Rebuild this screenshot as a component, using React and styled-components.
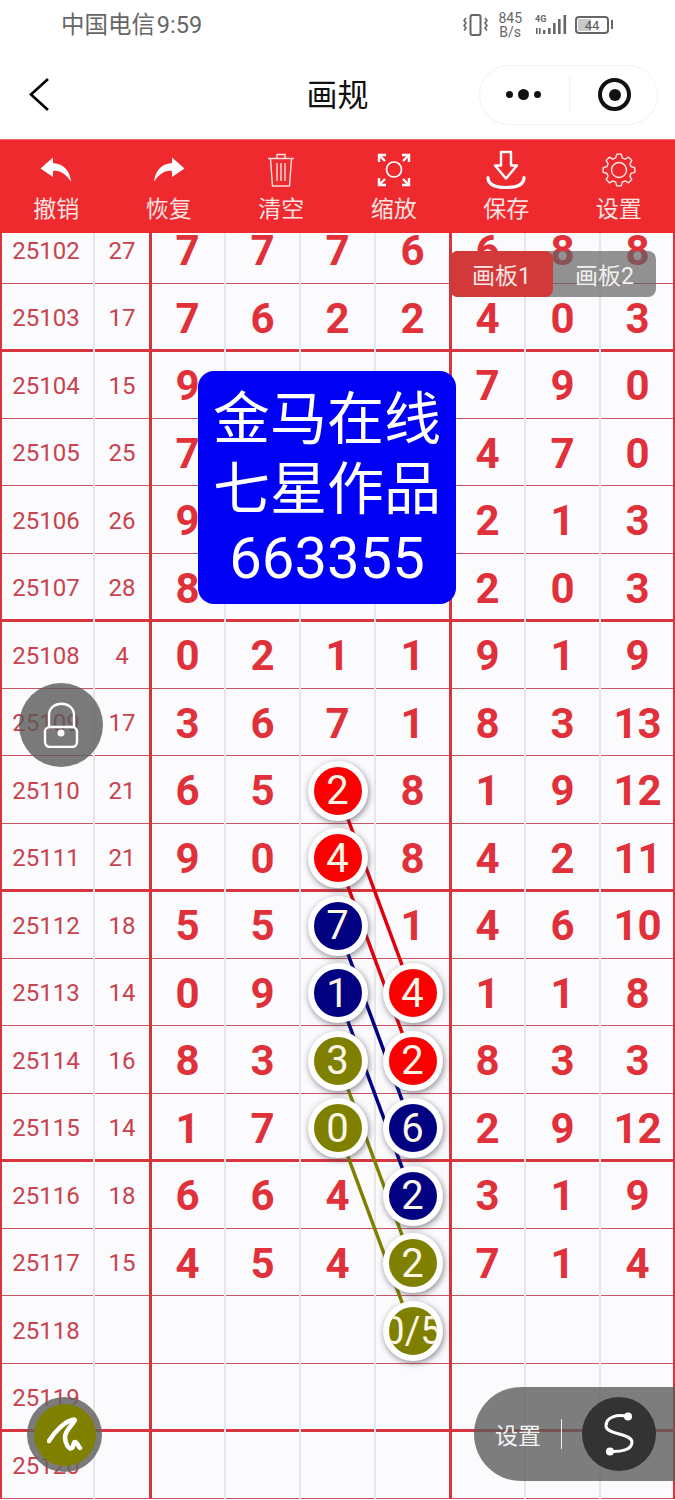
import React from 'react'
import styled, { createGlobalStyle } from 'styled-components'

const ROW_H = 67.5
const CELL_W = 75
const LEFT_W = 150

const sheet = [
  { id: 25102, sum: 27, nums: [7, 7, 7, 6, 6, 8, 8] },
  { id: 25103, sum: 17, nums: [7, 6, 2, 2, 4, 0, 3] },
  { id: 25104, sum: 15, nums: [9, '', '', '', 7, 9, 0] },
  { id: 25105, sum: 25, nums: [7, '', '', '', 4, 7, 0] },
  { id: 25106, sum: 26, nums: [9, '', '', '', 2, 1, 3] },
  { id: 25107, sum: 28, nums: [8, '', '', '', 2, 0, 3] },
  { id: 25108, sum: 4, nums: [0, 2, 1, 1, 9, 1, 9] },
  { id: 25109, sum: 17, nums: [3, 6, 7, 1, 8, 3, 13] },
  { id: 25110, sum: 21, nums: [6, 5, 2, 8, 1, 9, 12] },
  { id: 25111, sum: 21, nums: [9, 0, 4, 8, 4, 2, 11] },
  { id: 25112, sum: 18, nums: [5, 5, 7, 1, 4, 6, 10] },
  { id: 25113, sum: 14, nums: [0, 9, 1, 4, 1, 1, 8] },
  { id: 25114, sum: 16, nums: [8, 3, 3, 2, 8, 3, 3] },
  { id: 25115, sum: 14, nums: [1, 7, 0, 6, 2, 9, 12] },
  { id: 25116, sum: 18, nums: [6, 6, 4, 2, 3, 1, 9] },
  { id: 25117, sum: 15, nums: [4, 5, 4, 2, 7, 1, 4] },
  { id: 25118, sum: '', nums: ['', '', '', '0/5', '', '', ''] },
  { id: 25119, sum: '', nums: ['', '', '', '', '', '', ''] },
  { id: 25120, sum: '', nums: ['', '', '', '', '', '', ''] },
]

// row index + column index of every circled number, with its colour
const balls = {
  '8-2': '#fa0000', '9-2': '#fa0000',
  '10-2': '#000080', '11-2': '#000080',
  '12-2': '#808000', '13-2': '#808000',
  '11-3': '#fa0000', '12-3': '#fa0000',
  '13-3': '#000080', '14-3': '#000080',
  '15-3': '#808000', '16-3': '#808000',
}

const links = [
  { from: 8, to: 11, color: '#e0000a' },
  { from: 9, to: 12, color: '#e0000a' },
  { from: 10, to: 13, color: '#000080' },
  { from: 11, to: 14, color: '#000080' },
  { from: 12, to: 15, color: '#808000' },
  { from: 13, to: 16, color: '#808000' },
]

function UndoIcon({ flip }) {
  return (
    <svg width="32" height="26" viewBox="0 0 32 26" style={flip ? { transform: 'scaleX(-1)' } : undefined}>
      <path d="M13 0.5 L0.5 11.5 L13 20 L13 14 C20 13 26 17 31 25 C30 14 24 7 13 6 Z" fill="#fff" />
    </svg>
  )
}

function TrashIcon() {
  return (
    <svg width="28" height="34" viewBox="0 0 28 34" fill="none" stroke="#fff" strokeWidth="1.4" opacity="0.85">
      <path d="M1 5.5 H27 M10 5 V1.5 H18 V5" />
      <path d="M3.5 6 L5.5 33 H22.5 L24.5 6" />
      <path d="M10 10 V28 M14 10 V28 M18 10 V28" />
    </svg>
  )
}

function ZoomIcon() {
  return (
    <svg width="34" height="34" viewBox="0 0 34 34" fill="none" stroke="#fff" strokeWidth="2.4">
      <circle cx="17" cy="16.5" r="7.5" strokeWidth="1.7" />
      <path d="M2 9 V2 H9 M2 2 L8 8" />
      <path d="M32 9 V2 H25 M32 2 L26 8" />
      <path d="M2 25 V32 H9 M2 32 L8 26" />
      <path d="M32 25 V32 H25 M32 32 L26 26" />
    </svg>
  )
}

function SaveIcon() {
  return (
    <svg width="42" height="40" viewBox="0 0 42 40" fill="none" stroke="#fff" strokeLinejoin="round" strokeLinecap="round">
      <path d="M16 2 H26 V15.5 H32 L21 28.5 L10 15.5 H16 Z" strokeWidth="2.4" />
      <path d="M3 27.5 C3 34 9 37.5 21 37.5 C33 37.5 39 34 39 27.5" strokeWidth="3.2" />
    </svg>
  )
}

// outline gear with 8 teeth, the points are worked out around the centre
function gearPath() {
  const pts = []
  for (let i = 0; i < 8; i++) {
    const a = (i * Math.PI) / 4
    const steps = [[-0.27, 12.5], [-0.14, 16], [0.14, 16], [0.27, 12.5]]
    steps.forEach(([da, r]) => {
      pts.push(`${(17 + r * Math.cos(a + da)).toFixed(2)} ${(17 + r * Math.sin(a + da)).toFixed(2)}`)
    })
  }
  return `M${pts.join(' L')} Z`
}

function GearIcon() {
  return (
    <svg width="34" height="34" viewBox="0 0 34 34" fill="none" stroke="#fff" strokeWidth="1.4" strokeLinejoin="round" opacity="0.9">
      <path d={gearPath()} />
      <circle cx="17" cy="17" r="7.5" />
    </svg>
  )
}

function SignalIcon() {
  return (
    <svg width="36" height="24" viewBox="0 0 36 24" fill="#666">
      <text x="1" y="9" fontSize="9" fontWeight="700" fontFamily="Roboto, sans-serif">4G</text>
      <path d="M2 15 h1.6 v6 h-1.6 z M5 15 h1.6 v6 h-1.6 z" />
      <rect x="9" y="17" width="2.4" height="4" />
      <rect x="14" y="15" width="2.6" height="6" />
      <rect x="19" y="10" width="2.6" height="11" />
      <rect x="24" y="6" width="2.6" height="15" />
      <rect x="29.5" y="2" width="2.6" height="19" />
    </svg>
  )
}

function VibrateIcon() {
  return (
    <svg width="25" height="24" viewBox="0 0 25 24" fill="none" stroke="#666" strokeWidth="1.6">
      <rect x="7.5" y="2" width="10" height="20" rx="2" strokeWidth="2" />
      <path d="M3 5 l-2 2.5 l2 2.5 l-2 2.5 l2 2.5 l-2 2.5" />
      <path d="M22 5 l2 2.5 l-2 2.5 l2 2.5 l-2 2.5 l2 2.5" />
    </svg>
  )
}

function PenIcon() {
  return (
    <svg width="36" height="36" viewBox="0 0 36 36" fill="none" stroke="#fff" strokeWidth="4.5" strokeLinecap="round" strokeLinejoin="round">
      <path d="M2 24 C8 14 18 4 27 2.5 C31 3 18 12 18 20 C18 27 22 33 25 31 C27 29 26 25 28 25 C30 25 31 29 33 31" />
    </svg>
  )
}

function CurveIcon() {
  return (
    <svg width="44" height="50" viewBox="0 0 44 50" fill="none" stroke="#fff" strokeWidth="3">
      <path d="M31 7.5 C20 5 9 8 9 17 C9 26 35 24 35 33 C35 41 24 43 13 42.5" />
      <circle cx="31" cy="7.5" r="4" fill="#fff" stroke="none" />
      <circle cx="13" cy="42.5" r="4" fill="#fff" stroke="none" />
    </svg>
  )
}

const tools = [
  { label: '撤销', icon: <UndoIcon /> },
  { label: '恢复', icon: <UndoIcon flip /> },
  { label: '清空', icon: <TrashIcon /> },
  { label: '缩放', icon: <ZoomIcon /> },
  { label: '保存', icon: <SaveIcon /> },
  { label: '设置', icon: <GearIcon /> },
]

const cellX = col => LEFT_W + CELL_W * col + CELL_W / 2
const rowY = row => (row + 0.5) * ROW_H + 1

export default function App() {
  return (
    <>
      <GlobalStyle />
      <Page>
        <StatusBar>
          <Carrier>中国电信 9:59</Carrier>
          <StatusIcons>
            <VibrateIcon />
            <NetSpeed>845<br />B/s</NetSpeed>
            <SignalSlot><SignalIcon /></SignalSlot>
            <Battery><BatteryFill /><BatteryText>44</BatteryText></Battery>
          </StatusIcons>
        </StatusBar>

        <NavBar>
          <BackIcon width="24" height="36" viewBox="0 0 24 36" fill="none" stroke="#000" strokeWidth="2.6">
            <path d="M20 2 L3 17.5 L20 33" />
          </BackIcon>
          <NavTitle>画规</NavTitle>
          <Capsule>
            <Dots><Dot /><Dot $big /><Dot /></Dots>
            <CapsuleSep />
            <TargetIcon />
          </Capsule>
        </NavBar>

        <Toolbar>
          {tools.map(tool => (
            <Tool key={tool.label}>
              <ToolIcon>{tool.icon}</ToolIcon>
              <ToolLabel>{tool.label}</ToolLabel>
            </Tool>
          ))}
        </Toolbar>

        <Viewport>
          <Sheet>
            <Links width="675" height={sheet.length * ROW_H}>
              {links.map(link => (
                <line
                  key={link.from}
                  x1={cellX(2)}
                  y1={rowY(link.from)}
                  x2={cellX(3)}
                  y2={rowY(link.to)}
                  stroke={link.color}
                  strokeWidth="3.5"
                />
              ))}
            </Links>
            {sheet.map((row, r) => (
              <Row key={row.id} $thick={r % 4 === 1}>
                <IdCell>{row.id}</IdCell>
                <SumCell>{row.sum}</SumCell>
                {row.nums.map((n, c) => (
                  <NumCell key={c} $heavy={c === 3}>
                    {balls[`${r}-${c}`] || n === '0/5'
                      ? <Ball $color={balls[`${r}-${c}`] || '#808000'} $wide={n === '0/5'}>{n}</Ball>
                      : n}
                  </NumCell>
                ))}
              </Row>
            ))}
          </Sheet>
        </Viewport>

        <Tabs>
          <Tab $active>画板1</Tab>
          <Tab>画板2</Tab>
        </Tabs>

        <Banner>金马在线<br />七星作品<br /><BannerNum>663355</BannerNum></Banner>

        <LockButton>
          <svg width="40" height="46" viewBox="0 0 40 46" fill="none" stroke="#fff" strokeWidth="2.4">
            <path d="M8 25 V13 C8 -2 33 -2 33 13 V25" />
            <rect x="4" y="25" width="32" height="20" rx="5" />
            <circle cx="20" cy="31" r="3.5" fill="#fff" stroke="none" />
          </svg>
        </LockButton>

        <PenButton><PenDisc><PenIcon /></PenDisc></PenButton>

        <SettingsPill>
          <PillLabel>设置</PillLabel>
          <PillSep />
          <PillDisc><CurveIcon /></PillDisc>
        </SettingsPill>
      </Page>
    </>
  )
}

const GlobalStyle = createGlobalStyle`
  html, body {
    margin: 0;
    padding: 0;
    background: #fff;
  }
  * {
    box-sizing: border-box;
  }
`

const Page = styled.div`
  position: relative;
  width: 675px;
  height: 1500px;
  overflow: hidden;
  display: flex;
  flex-direction: column;
  font-family: Roboto, "Noto Sans CJK SC", sans-serif;
`

const StatusBar = styled.div`
  height: 50px;
  flex: none;
  display: flex;
  align-items: center;
  justify-content: space-between;
  padding: 0 66px 0 61px;
  color: #666;
`

const Carrier = styled.div`
  font-size: 23.5px;
  word-spacing: -4px;
  padding-bottom: 4px;
`

const StatusIcons = styled.div`
  display: flex;
  align-items: center;
  gap: 10px;
`

const NetSpeed = styled.div`
  font-size: 14px;
  line-height: 14px;
  text-align: center;
`

const SignalSlot = styled.div`
  display: flex;
  margin: 0 -5px 0 2px;
`

const Battery = styled.div`
  position: relative;
  width: 34px;
  height: 18px;
  border: 2px solid #666;
  border-radius: 4px;
  display: flex;
  align-items: center;
  justify-content: center;
  &::after {
    content: '';
    position: absolute;
    right: -6px;
    top: 2px;
    width: 2px;
    height: 9px;
    background: #666;
  }
`

const BatteryFill = styled.div`
  position: absolute;
  left: 1px;
  top: 1px;
  bottom: 1px;
  width: 44%;
  background: #c8c8c8;
`

const BatteryText = styled.span`
  position: relative;
  font-size: 13px;
  color: #555;
`

const NavBar = styled.div`
  height: 89px;
  flex: none;
  display: grid;
  grid-template-columns: 1fr auto 1fr;
  align-items: center;
  padding: 0 17px;
`

const BackIcon = styled.svg`
  margin-left: 11px;
`

const NavTitle = styled.div`
  font-size: 31px;
  color: #111;
  margin-top: -4px;
`

const Capsule = styled.div`
  justify-self: end;
  width: 179px;
  height: 60px;
  border: 1px solid #f2f2f2;
  border-radius: 30px;
  display: flex;
  align-items: center;
  justify-content: space-between;
  padding: 0 26px;
`

const Dots = styled.div`
  display: flex;
  align-items: center;
  gap: 5px;
`

const Dot = styled.div`
  width: ${p => (p.$big ? 11 : 7)}px;
  height: ${p => (p.$big ? 11 : 7)}px;
  border-radius: 50%;
  background: #111;
`

const CapsuleSep = styled.div`
  width: 1px;
  height: 38px;
  background: #f2f2f2;
`

const TargetIcon = styled.div`
  width: 33px;
  height: 33px;
  border-radius: 50%;
  border: 4px solid #111;
  display: flex;
  align-items: center;
  justify-content: center;
  &::after {
    content: '';
    width: 12px;
    height: 12px;
    border-radius: 50%;
    background: #111;
  }
`

const Toolbar = styled.div`
  height: 94px;
  flex: none;
  display: grid;
  grid-template-columns: repeat(6, 1fr);
  background: #ee2a2e;
  border-top: 1px solid #f06a6a;
`

const Tool = styled.div`
  display: flex;
  flex-direction: column;
  align-items: center;
`

const ToolIcon = styled.div`
  height: 59px;
  display: flex;
  align-items: center;
  justify-content: center;
`

const ToolLabel = styled.div`
  font-size: 23px;
  line-height: 22px;
  color: #fbe3e3;
`

const Viewport = styled.div`
  flex: 1;
  min-height: 0;
  overflow: hidden;
  display: flex;
  flex-direction: column;
  justify-content: flex-end;
  padding-bottom: 1.5px;
  background: #fbfafc;
`

const Sheet = styled.div`
  position: relative;
  flex: none;
`

const Links = styled.svg`
  position: absolute;
  left: 0;
  top: 0;
  z-index: 1;
`

const Row = styled.div`
  height: ${ROW_H}px;
  display: grid;
  grid-template-columns: 94px 56px repeat(7, ${CELL_W}px);
  box-shadow: ${p => (p.$thick ? 'inset 0 -2px 0 #d8363e, 0 1px 0 #d8363e' : 'inset 0 -1px 0 #c95560')};
`

const Cell = styled.div`
  display: flex;
  align-items: center;
  justify-content: center;
  padding-top: 2px;
`

const IdCell = styled(Cell)`
  font-size: 24px;
  color: #c8434e;
  padding-right: 2px;
  box-shadow: inset 2px 0 0 #d8363e, inset -1px 0 0 #e6e4e6, 1px 0 0 #e6e4e6;
`

const SumCell = styled(Cell)`
  font-size: 24px;
  color: #c8434e;
  box-shadow: inset -1px 0 0 #d4363e, 2px 0 0 #d4363e;
`

const NumCell = styled(Cell)`
  font-size: 42px;
  font-weight: 700;
  color: #e0303a;
  box-shadow: ${p => (p.$heavy ? 'inset -1px 0 0 #d4363e, 2px 0 0 #d4363e' : 'inset -1px 0 0 #e8e6e8, 1px 0 0 #e8e6e8')};
  &:last-child {
    box-shadow: inset -2px 0 0 #d8363e;
  }
`

const Ball = styled.div`
  position: relative;
  z-index: 2;
  flex: none;
  width: 60px;
  height: 60px;
  border-radius: 50%;
  border: 6px solid #fff;
  background: ${p => p.$color};
  box-shadow: 1px 2px 6px rgba(60, 60, 80, 0.6);
  color: #fbf6e6;
  font-size: ${p => (p.$wide ? 38 : 40)}px;
  font-weight: 400;
  white-space: nowrap;
  display: flex;
  align-items: center;
  justify-content: center;
  overflow: hidden;
`

const Tabs = styled.div`
  position: absolute;
  z-index: 5;
  left: 450px;
  top: 251px;
  width: 206px;
  height: 46px;
  display: grid;
  grid-template-columns: 103px 103px;
  border-radius: 8px;
  background: rgba(100, 100, 100, 0.7);
`

const Tab = styled.div`
  border-radius: 8px;
  background: ${p => (p.$active ? '#d23a3a' : 'transparent')};
  color: ${p => (p.$active ? '#fbe6e6' : '#f0f0f0')};
  font-size: 23px;
  display: flex;
  align-items: center;
  justify-content: center;
`

const Banner = styled.div`
  position: absolute;
  z-index: 4;
  left: 198px;
  top: 371px;
  width: 258px;
  height: 233px;
  border-radius: 16px;
  background: #0000f5;
  color: #fff;
  font-size: 57px;
  line-height: 69.5px;
  text-align: center;
  padding-top: 14px;
  white-space: nowrap;
`

const BannerNum = styled.span`
  font-size: 58px;
`

const LockButton = styled.div`
  position: absolute;
  z-index: 5;
  left: 19px;
  top: 683px;
  width: 84px;
  height: 84px;
  border-radius: 50%;
  background: rgba(90, 90, 90, 0.8);
  display: flex;
  align-items: center;
  justify-content: center;
`

const PenButton = styled.div`
  position: absolute;
  z-index: 5;
  left: 27px;
  top: 1397px;
  width: 75px;
  height: 75px;
  border-radius: 50%;
  background: rgba(100, 100, 100, 0.85);
  display: flex;
  align-items: center;
  justify-content: center;
`

const PenDisc = styled.div`
  width: 62px;
  height: 62px;
  border-radius: 50%;
  background: #808000;
  display: flex;
  align-items: center;
  justify-content: center;
`

const SettingsPill = styled.div`
  position: absolute;
  z-index: 5;
  left: 474px;
  top: 1387px;
  width: 201px;
  height: 94px;
  border-radius: 47px 0 0 47px;
  background: rgba(90, 90, 90, 0.78);
  display: flex;
  align-items: center;
  padding-left: 21px;
`

const PillLabel = styled.div`
  font-size: 23px;
  color: #f2f2f2;
`

const PillSep = styled.div`
  width: 1px;
  height: 30px;
  background: #eee;
  margin-left: 20px;
`

const PillDisc = styled.div`
  width: 74px;
  height: 74px;
  margin-left: 20px;
  border-radius: 50%;
  background: #333;
  display: flex;
  align-items: center;
  justify-content: center;
`
